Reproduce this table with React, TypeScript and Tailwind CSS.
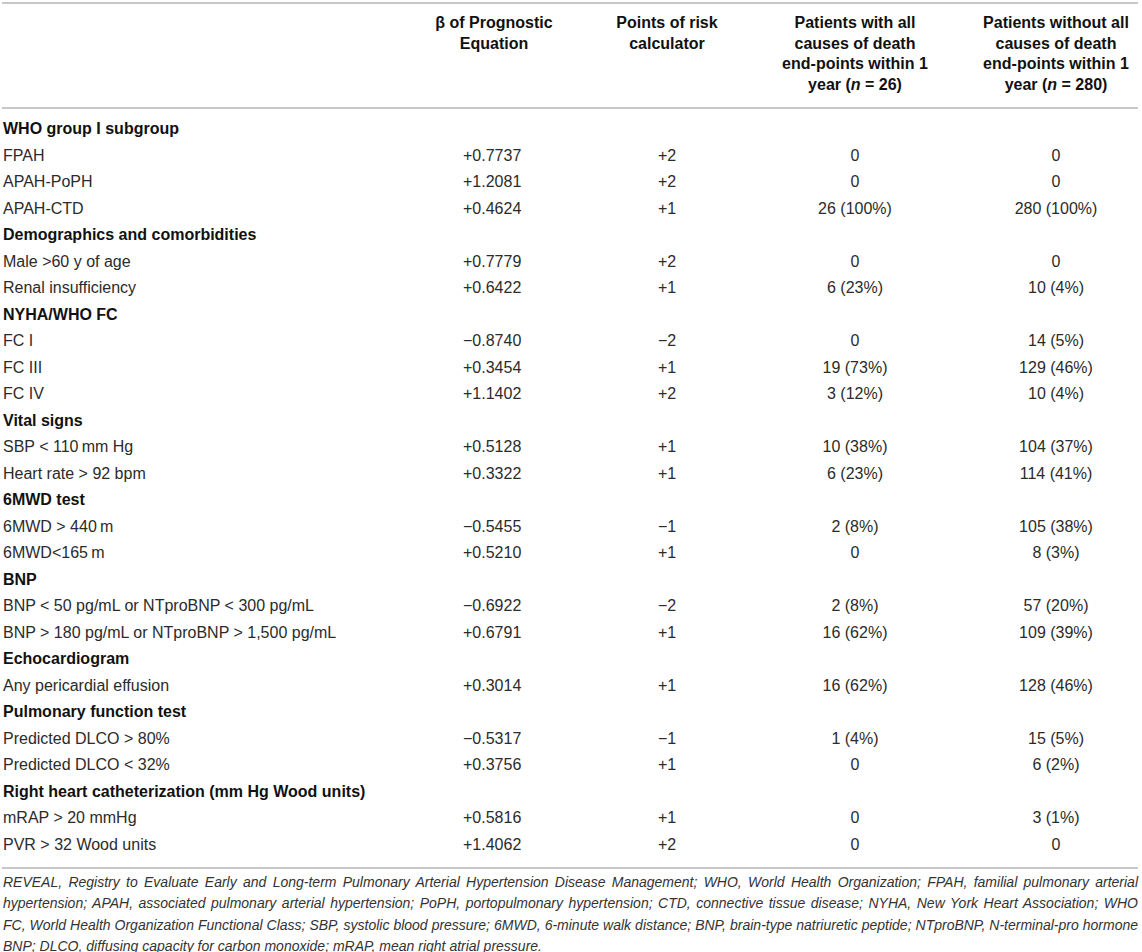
type Row =
  | { kind: "section"; label: string }
  | { kind: "item"; label: string; beta: string; points: string; withEnd: string; withoutEnd: string };

const rows: Row[] = [
  { kind: "section", label: "WHO group I subgroup" },
  { kind: "item", label: "FPAH", beta: "+0.7737", points: "+2", withEnd: "0", withoutEnd: "0" },
  { kind: "item", label: "APAH-PoPH", beta: "+1.2081", points: "+2", withEnd: "0", withoutEnd: "0" },
  { kind: "item", label: "APAH-CTD", beta: "+0.4624", points: "+1", withEnd: "26 (100%)", withoutEnd: "280 (100%)" },
  { kind: "section", label: "Demographics and comorbidities" },
  { kind: "item", label: "Male >60 y of age", beta: "+0.7779", points: "+2", withEnd: "0", withoutEnd: "0" },
  { kind: "item", label: "Renal insufficiency", beta: "+0.6422", points: "+1", withEnd: "6 (23%)", withoutEnd: "10 (4%)" },
  { kind: "section", label: "NYHA/WHO FC" },
  { kind: "item", label: "FC I", beta: "\u22120.8740", points: "\u22122", withEnd: "0", withoutEnd: "14 (5%)" },
  { kind: "item", label: "FC III", beta: "+0.3454", points: "+1", withEnd: "19 (73%)", withoutEnd: "129 (46%)" },
  { kind: "item", label: "FC IV", beta: "+1.1402", points: "+2", withEnd: "3 (12%)", withoutEnd: "10 (4%)" },
  { kind: "section", label: "Vital signs" },
  { kind: "item", label: "SBP < 110\u2009mm Hg", beta: "+0.5128", points: "+1", withEnd: "10 (38%)", withoutEnd: "104 (37%)" },
  { kind: "item", label: "Heart rate > 92 bpm", beta: "+0.3322", points: "+1", withEnd: "6 (23%)", withoutEnd: "114 (41%)" },
  { kind: "section", label: "6MWD test" },
  { kind: "item", label: "6MWD > 440\u2009m", beta: "\u22120.5455", points: "\u22121", withEnd: "2 (8%)", withoutEnd: "105 (38%)" },
  { kind: "item", label: "6MWD<165\u2009m", beta: "+0.5210", points: "+1", withEnd: "0", withoutEnd: "8 (3%)" },
  { kind: "section", label: "BNP" },
  { kind: "item", label: "BNP < 50 pg/mL or NTproBNP < 300 pg/mL", beta: "\u22120.6922", points: "\u22122", withEnd: "2 (8%)", withoutEnd: "57 (20%)" },
  { kind: "item", label: "BNP > 180 pg/mL or NTproBNP > 1,500 pg/mL", beta: "+0.6791", points: "+1", withEnd: "16 (62%)", withoutEnd: "109 (39%)" },
  { kind: "section", label: "Echocardiogram" },
  { kind: "item", label: "Any pericardial effusion", beta: "+0.3014", points: "+1", withEnd: "16 (62%)", withoutEnd: "128 (46%)" },
  { kind: "section", label: "Pulmonary function test" },
  { kind: "item", label: "Predicted DLCO > 80%", beta: "\u22120.5317", points: "\u22121", withEnd: "1 (4%)", withoutEnd: "15 (5%)" },
  { kind: "item", label: "Predicted DLCO < 32%", beta: "+0.3756", points: "+1", withEnd: "0", withoutEnd: "6 (2%)" },
  { kind: "section", label: "Right heart catheterization (mm Hg Wood units)" },
  { kind: "item", label: "mRAP > 20 mmHg", beta: "+0.5816", points: "+1", withEnd: "0", withoutEnd: "3 (1%)" },
  { kind: "item", label: "PVR > 32 Wood units", beta: "+1.4062", points: "+2", withEnd: "0", withoutEnd: "0" },
];

const footnote = [
  "REVEAL, Registry to Evaluate Early and Long-term Pulmonary Arterial Hypertension Disease Management; WHO, World Health Organization; FPAH, familial pulmonary arterial",
  "hypertension; APAH, associated pulmonary arterial hypertension; PoPH, portopulmonary hypertension; CTD, connective tissue disease; NYHA, New York Heart Association; WHO",
  "FC, World Health Organization Functional Class; SBP, systolic blood pressure; 6MWD, 6-minute walk distance; BNP, brain-type natriuretic peptide; NTproBNP, N-terminal-pro hormone",
];

const gridCols = "grid grid-cols-[418px_148px_198px_178px_194px]";

export default function App() {
  return (
    <div className="w-[1142px] min-h-[952px] bg-white font-['Liberation_Sans',Arial,sans-serif]">
      <div className="ml-[2px] w-[1136px] pt-[2px]">
        {/* Header */}
        <div
          className={`${gridCols} border-y-2 border-[#c8c8c8] pt-[9px] pb-[11px] text-[16px] leading-[20.7px] font-bold text-[#111]`}
        >
          <div />
          <div className="text-center">
            β of Prognostic
            <br />
            Equation
          </div>
          <div className="text-center">
            Points of risk
            <br />
            calculator
          </div>
          <div className="text-center">
            Patients with all
            <br />
            causes of death
            <br />
            end-points within 1
            <br />
            year (<i>n</i> = 26)
          </div>
          <div className="pl-[30px] text-center">
            Patients without all
            <br />
            causes of death
            <br />
            end-points within 1
            <br />
            year (<i>n</i> = 280)
          </div>
        </div>

        {/* Body */}
        <div className="border-b-2 border-[#c8c8c8] pt-[7px] pb-[9px] text-[16px]">
          {rows.map((r, i) =>
            r.kind === "section" ? (
              <div key={i} className="flex h-[26.5px] items-center pl-px font-bold text-[#111]">
                {r.label}
              </div>
            ) : (
              <div key={i} className={`${gridCols} h-[26.5px] items-center text-[#2b2b2b]`}>
                <div className="pl-px">{r.label}</div>
                <div className="pl-[43px]">{r.beta}</div>
                <div className="text-center">{r.points}</div>
                <div className="text-center">{r.withEnd}</div>
                <div className="pl-[30px] text-center">{r.withoutEnd}</div>
              </div>
            )
          )}
        </div>

        {/* Footnote */}
        <div className="pt-[3px] pl-px text-[14px] leading-[21.5px] italic text-[#333]">
          {footnote.map((line, i) => (
            <div key={i} className="text-justify [text-align-last:justify]">
              {line}
            </div>
          ))}
          <div>BNP; DLCO, diffusing capacity for carbon monoxide; mRAP, mean right atrial pressure.</div>
        </div>
      </div>
    </div>
  );
}
